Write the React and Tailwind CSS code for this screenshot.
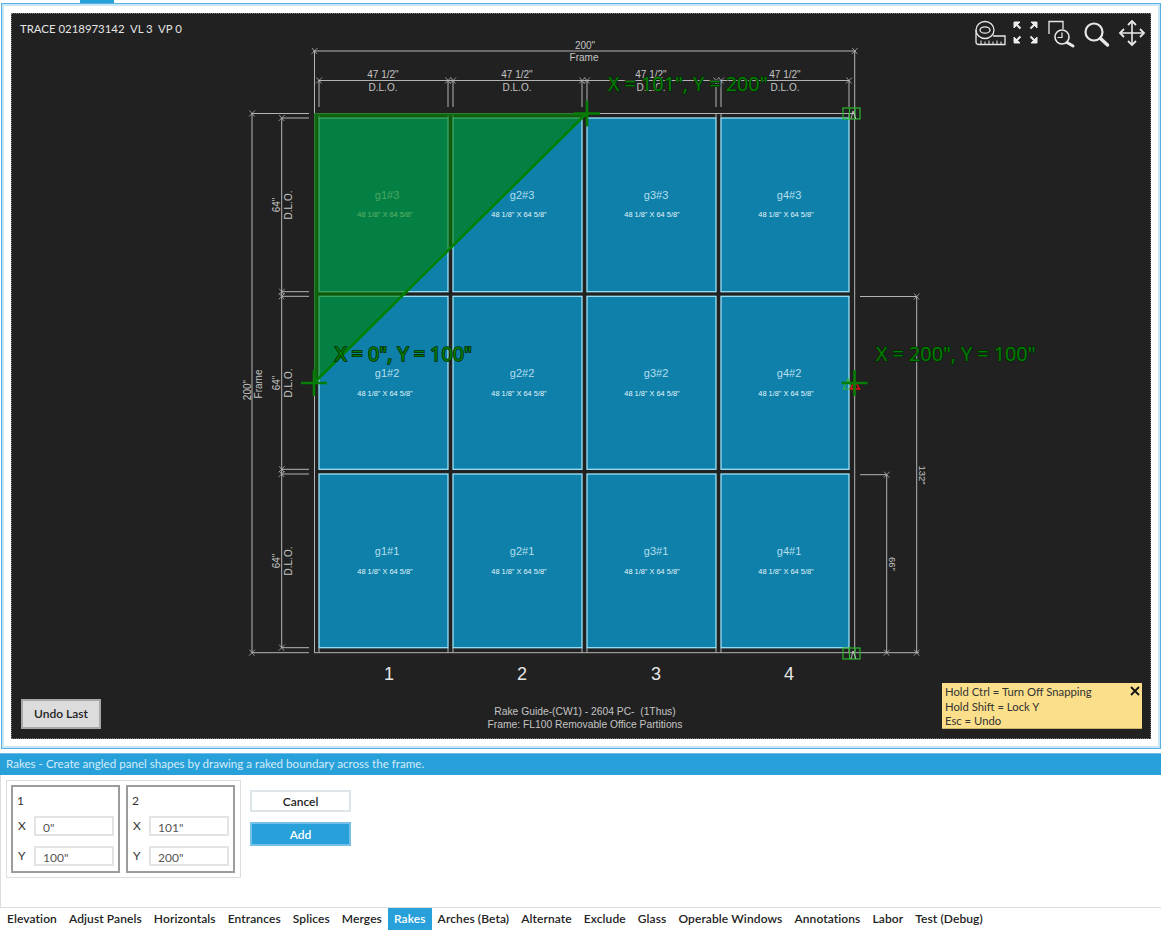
const blue = '#28a0da'
const colsX = [[319, 448], [453, 582], [587, 716], [721, 849]]
const rowsY = [[118, 291.7], [296.3, 469.3], [474, 647.7]]
const rowNames = [3, 2, 1]
const labelCx = [387, 522, 656, 789]
const sizeCx = [385, 519, 652, 786]
const labelY = [199, 377, 555]
const sizeY = [217, 396, 574]

const tabs = ['Elevation', 'Adjust Panels', 'Horizontals', 'Entrances', 'Splices', 'Merges', 'Rakes', 'Arches (Beta)', 'Alternate', 'Exclude', 'Glass', 'Operable Windows', 'Annotations', 'Labor', 'Test (Debug)']

const lineColor = '#b4b4b4'
const textColor = '#c4c4c4'

function Tick({ x, y }) {
  return (
    <path d={`M${x - 3} ${y + 3}L${x + 3} ${y - 3}M${x - 2.5} ${y - 3}L${x + 2.5} ${y + 3}`} stroke={lineColor} strokeWidth="0.8" />
  )
}

function HLine({ x1, x2, y }) {
  return <line x1={x1} x2={x2} y1={y} y2={y} stroke={lineColor} strokeWidth="1" />
}

function VLine({ x, y1, y2 }) {
  return <line x1={x} x2={x} y1={y1} y2={y2} stroke={lineColor} strokeWidth="1" />
}

function DimText({ x, y, children, size = 10, rotate = 0 }) {
  return (
    <text
      x={x}
      y={y}
      fontSize={size}
      fill={textColor}
      textAnchor="middle"
      transform={rotate ? `rotate(${rotate} ${x} ${y})` : undefined}
    >
      {children}
    </text>
  )
}

function Cross({ x, y }) {
  return (
    <path d={`M${x - 13} ${y}H${x + 13}M${x} ${y - 13}V${y + 13}`} stroke="#067d06" strokeWidth="2.6" fill="none" />
  )
}

function CoordLabel({ x, y, children }) {
  return (
    <text
      x={x}
      y={y}
      fontSize="19.8"
      fontWeight="500"
      fill="#008000"
      stroke="#062806"
      strokeWidth="1.6"
      paintOrder="stroke"
      style={{ fontFamily: '"Open Sans", sans-serif' }}
    >
      {children}
    </text>
  )
}

function Anchor({ y }) {
  return (
    <g fill="none" stroke="#2bb52b" strokeWidth="1.2">
      <rect x="843" y={y} width="17" height="11" />
      <path d={`M849.5 ${y}V${y + 11}M855 ${y}V${y + 11}`} />
      <path d={`M851 ${y + 11}L853 ${y + 3}L856 ${y + 11}`} stroke="#d8d8d8" strokeWidth="0.8" />
    </g>
  )
}

function ExpandArrow({ x, y, dx, dy }) {
  return (
    <g>
      <path d={`M${x} ${y}h${dx * 6}L${x} ${y + dy * 6}Z`} fill="#eee" />
      <line x1={x + dx * 2} y1={y + dy * 2} x2={x + dx * 6.5} y2={y + dy * 6.5} stroke="#eee" strokeWidth="2" />
    </g>
  )
}

function ToolIcons() {
  return (
    <g fill="none" stroke="#e8e8e8">
      {/* tape measure */}
      <g strokeWidth="1.3">
        <ellipse cx="985" cy="30" rx="9" ry="8.5" />
        <ellipse cx="985" cy="30" rx="5" ry="3.2" />
        <path d="M976 30V42Q976 44.5 979 44.5H1005V36H993" />
        <path d="M981 44V40.5M985 44V41.5M989 44V40.5M993 44V41.5M997 44V40.5M1001 44V41.5" strokeWidth="1" />
      </g>
      {/* fit to window */}
      <ExpandArrow x={1014} y={22} dx={1} dy={1} />
      <ExpandArrow x={1037} y={22} dx={-1} dy={1} />
      <ExpandArrow x={1014} y={43} dx={1} dy={-1} />
      <ExpandArrow x={1037} y={43} dx={-1} dy={-1} />
      {/* previous zoom */}
      <path d="M1049 34V21.5H1063V29" strokeWidth="1.3" />
      <circle cx="1062" cy="37" r="7" strokeWidth="1.6" />
      <path d="M1062 32.5V37.5H1057.5" strokeWidth="1.2" />
      <path d="M1067 42.5L1073 46" strokeWidth="3" strokeLinecap="round" />
      {/* zoom */}
      <circle cx="1094" cy="32" r="8.5" strokeWidth="2.2" />
      <path d="M1100.5 38.5L1107.5 45" strokeWidth="3.4" strokeLinecap="round" />
      {/* pan */}
      <path d="M1120 33H1144M1132 21V45" strokeWidth="1.6" />
      <path d="M1124 29L1120 33L1124 37M1140 29L1144 33L1140 37M1128 25L1132 21L1136 25M1128 41L1132 45L1136 41" strokeWidth="1.8" />
    </g>
  )
}

function Drawing() {
  return (
    <svg viewBox="12 14 1138 724" className="block w-full h-full" style={{ fontFamily: '"Liberation Sans", Arial, sans-serif' }}>
      {/* glass lites */}
      {colsX.map(([x1, x2], c) =>
        rowsY.map(([y1, y2], r) => (
          <g key={`${c}-${r}`}>
            <rect x={x1} y={y1} width={x2 - x1} height={y2 - y1} fill="#0e80aa" stroke="#9ce2f7" strokeWidth="1.3" />
            <text x={labelCx[c]} y={labelY[r]} fontSize="11" fill="#b4dfee" textAnchor="middle">
              g{c + 1}#{rowNames[r]}
            </text>
            <text x={sizeCx[c]} y={sizeY[r]} fontSize="7.4" fill="#e2f4fa" textAnchor="middle">
              48 1/8" X 64 5/8"
            </text>
          </g>
        ))
      )}

      {/* mullion edges run on to the frame */}
      {[319, 448, 453, 582, 587, 716, 721, 849].map((x) => (
        <g key={x}>
          <VLine x={x} y1={113} y2={118} />
          <VLine x={x} y1={648} y2={653} />
        </g>
      ))}

      {/* frame */}
      <HLine x1={314} x2={855} y={113.5} />
      <HLine x1={314} x2={919} y={652.7} />
      <VLine x={314.5} y1={51} y2={652.7} />
      <VLine x={854.7} y1={51} y2={652.7} />

      {/* top dims */}
      <HLine x1={313} x2={856} y={51} />
      <Tick x={314.5} y={51} />
      <Tick x={854.7} y={51} />
      <DimText x={585} y={49}>200"</DimText>
      <DimText x={584} y={61}>Frame</DimText>
      <HLine x1={319} x2={849} y={80.5} />
      {[319, 448, 453, 582, 587, 716, 721, 849].map((x) => (
        <g key={x}>
          <VLine x={x} y1={80} y2={107} />
          <Tick x={x} y={80.5} />
        </g>
      ))}
      {[383, 517, 651, 785].map((x) => (
        <g key={x}>
          <DimText x={x} y={78}>47 1/2"</DimText>
          <DimText x={x} y={91}>D.L.O.</DimText>
        </g>
      ))}

      {/* left dims */}
      <VLine x={252} y1={113} y2={653} />
      <HLine x1={252} x2={309} y={113.5} />
      <HLine x1={252} x2={309} y={652.7} />
      <Tick x={252} y={113.5} />
      <Tick x={252} y={652.7} />
      <VLine x={281.7} y1={118} y2={648} />
      {[118, 291.7, 296.3, 469.3, 474, 647.7].map((y) => (
        <g key={y}>
          <HLine x1={282} x2={309} y={y} />
          <Tick x={281.7} y={y} />
        </g>
      ))}
      <DimText x={251} y={390} rotate={-90}>200"</DimText>
      <DimText x={262} y={384} rotate={-90}>Frame</DimText>
      {[205, 383, 561].map((y) => (
        <g key={y}>
          <DimText x={280} y={y} rotate={-90}>64"</DimText>
          <DimText x={292} y={y} rotate={-90}>D.L.O.</DimText>
        </g>
      ))}

      {/* right dims */}
      <HLine x1={860} x2={917} y={296.5} />
      <HLine x1={860} x2={887} y={474.7} />
      <VLine x={916.7} y1={296} y2={653} />
      <VLine x={886.7} y1={474} y2={653} />
      <Tick x={916.7} y={296.5} />
      <Tick x={886.7} y={474.7} />
      <Tick x={916.7} y={652.7} />
      <Tick x={886.7} y={652.7} />
      <DimText x={918.5} y={475} size={9.5} rotate={90}>132"</DimText>
      <DimText x={888.5} y={564} size={9.5} rotate={90}>66"</DimText>

      {/* column numbers */}
      {[389, 522, 656, 789].map((x, i) => (
        <text key={x} x={x} y={680} fontSize="18" fill="#e6e6e6" textAnchor="middle">
          {i + 1}
        </text>
      ))}

      <text x={585} y={715} fontSize="10.3" fill={textColor} textAnchor="middle" style={{ whiteSpace: 'pre' }}>
        Rake Guide-(CW1) - 2604 PC-  (1Thus)
      </text>
      <text x={585} y={728} fontSize="10.3" fill={textColor} textAnchor="middle">
        Frame: FL100 Removable Office Partitions
      </text>

      {/* snap anchors */}
      <Anchor y={108} />
      <Anchor y={648} />
      <path d="M848 379L843.5 389H852Z" fill="none" stroke="#2bb52b" strokeWidth="1.2" />
      <path d="M855 381L850.5 389H859.5Z" fill="none" stroke="#e01010" strokeWidth="1.4" />

      {/* rake being drawn */}
      <path d="M315 114H587L315 383Z" fill="#008000" fillOpacity="0.6" />
      <path d="M315.5 383V114.5H587" fill="none" stroke="#0f6b12" strokeWidth="3" opacity="0.8" />
      <line x1="587" y1="113" x2="314" y2="383" stroke="#008000" strokeWidth="2.6" />
      <Cross x={587} y={113.5} />
      <Cross x={314} y={383} />
      <Cross x={854.5} y={383} />

      <CoordLabel x={608} y={91}>X = 101", Y = 200"</CoordLabel>
      <CoordLabel x={335} y={361}>X = 0", Y = 100"</CoordLabel>
      <CoordLabel x={876} y={361}>X = 200", Y = 100"</CoordLabel>

      <ToolIcons />
    </svg>
  )
}

function Field({ label, value }) {
  return (
    <div className="flex items-center h-[20px] text-[12px] text-[#333]">
      <span className="w-[21px] shrink-0 pl-[5px]">{label}</span>
      <div className="h-[20px] w-[80px] border-2 border-[#e4e4e4] bg-white pl-[7px] leading-[18px] pt-[1px] text-[#555]">{value}</div>
    </div>
  )
}

function PointBox({ n, x, y, width }) {
  return (
    <div className={`h-[88px] ${width} border-2 border-[#9c9c9c] flex flex-col`}>
      <div className="h-[29px] pl-[4px] pt-[6px] text-[12px] leading-[16px] text-[#333]">{n}</div>
      <Field label="X" value={x} />
      <div className="h-[10px]" />
      <Field label="Y" value={y} />
    </div>
  )
}

export default function App() {
  return (
    <div className="w-[1161px] h-[930px] overflow-hidden bg-white flex flex-col" style={{ fontFamily: 'Lato, "Open Sans", sans-serif' }}>
      <div className="h-[3px] pl-[80px]">
        <div className="h-full w-[34px] bg-[#28a0da]" />
      </div>

      <div className="h-[746px] ml-[1px] border border-[#58b0e2]">
        <div className="h-full border-2 border-[#cbe7f7] p-[7px]">
          <div className="relative h-full bg-[#212121] border border-dotted border-[#777] overflow-hidden">
            <Drawing />
            <div className="absolute left-[8px] top-[7px] text-[11.4px] leading-[16px] text-[#e4e4e4] whitespace-pre">
              TRACE 0218973142  VL 3  VP 0
            </div>
            <button className="absolute left-[9px] bottom-[9px] w-[80px] h-[30px] bg-[#dcdcdc] border-2 border-[#a8a8a8] text-[12px] font-semibold text-[#222]">
              Undo Last
            </button>
            <div className="absolute left-[930px] top-[669px] w-[200px] h-[46px] bg-[#fbdf8a] border-b border-[#c9b36c] pl-[3px] pt-[2px] text-[11.3px] leading-[14.6px] text-[#333]">
              <div>Hold Ctrl = Turn Off Snapping</div>
              <div>Hold Shift = Lock Y</div>
              <div>Esc = Undo</div>
              <svg viewBox="0 0 10 10" className="absolute right-[2px] top-[3px] w-[10px] h-[10px]">
                <path d="M1 1L9 9M9 1L1 9" stroke="#111" strokeWidth="1.8" />
              </svg>
            </div>
          </div>
        </div>
      </div>

      <div className="h-[4px]" />

      <div className="h-[22px] border-t border-[#6fbde8] bg-[#28a0da] pl-[6px] text-[11.6px] leading-[20px] text-[#d3ecf9] whitespace-nowrap">
        Rakes - Create angled panel shapes by drawing a raked boundary across the frame.
      </div>

      <div className="h-[133px] border-l border-b border-[#dcdcdc] pl-[5px] pt-[5px] flex items-start">
        <div className="w-[235px] h-[98px] border border-[#dedede] p-[4px] flex gap-[6px]">
          <PointBox n="1" x={'0"'} y={'100"'} width="w-[109px]" />
          <PointBox n="2" x={'101"'} y={'200"'} width="w-[109px]" />
        </div>
        <div className="ml-[9px] pt-[10px] w-[101px] flex flex-col gap-[10px]">
          <button className="h-[22px] pt-[1px] border-2 border-[#dfe6ea] bg-white text-[12px] font-semibold text-[#222] leading-none">Cancel</button>
          <button className="h-[24px] pt-[1px] border-2 border-[#74c0e8] text-[12px] font-semibold text-white leading-none" style={{ backgroundColor: blue }}>
            Add
          </button>
        </div>
      </div>

      <div className="h-[22px] flex items-stretch pl-[1px]">
        {tabs.map((t) => (
          <div
            key={t}
            className={`px-[6px] text-[12px] font-semibold tracking-[0.1px] leading-[21px] whitespace-nowrap ${t === 'Rakes' ? 'bg-[#28a0da] text-white' : 'text-[#222]'}`}
          >
            {t}
          </div>
        ))}
      </div>
    </div>
  )
}
